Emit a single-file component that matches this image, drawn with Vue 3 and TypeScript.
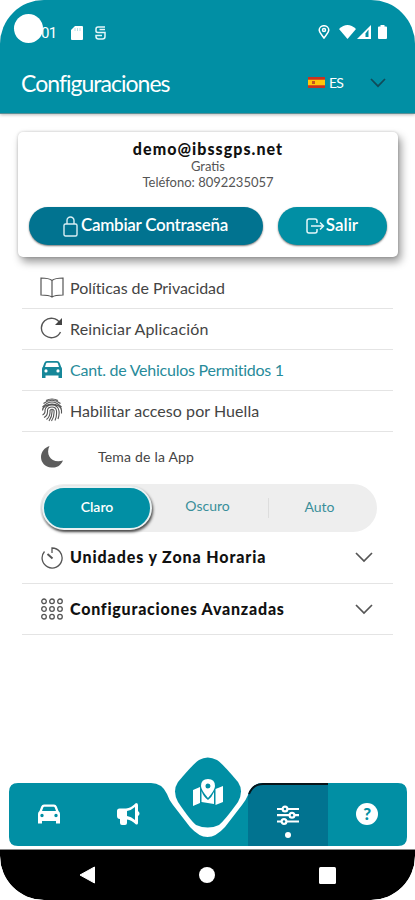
<script setup lang="ts">
import { ref } from 'vue'

const themes = ['Claro', 'Oscuro', 'Auto']
const activeTheme = ref('Claro')
const dots = [4, 11, 18]
</script>

<template>
  <div class="screen">
    <header class="header">
      <div class="status">
        <div class="status-left">
          <i class="camera"></i>
          <span class="time">01</span>
          <svg class="sd" width="12" height="14" viewBox="0 0 12 14"><path d="M4 0h7q1 0 1 1v12q0 1-1 1H1q-1 0-1-1V4z" fill="#fff" /><path d="M4 2v3M6.500 2v3M9 2v3" stroke="#a5d7df" stroke-width=".8" /></svg>
          <svg class="five" width="11" height="14" viewBox="0 0 11 14" fill="none" stroke="#e4f6f9" stroke-width="1.500"><path d="M10 1H3Q1 1 1 3v2q0 1.500 2 1.500h7v4q0 2.500-2.500 2.500h-4Q1 13 1 10.500V9.500h6M4.500 3.500H10" /></svg>
        </div>
        <div class="status-right">
          <svg width="12" height="14" viewBox="0 0 12 14" fill="none" stroke="#fff" stroke-width="1.500"><path d="M6 13C4 10 1.200 7.500 1.200 5a4.800 4.300 0 0 1 9.600 0C10.800 7.500 8 10 6 13z" /><circle cx="6" cy="5" r="1.500" /></svg>
          <svg class="wifi" width="17" height="14" viewBox="0 0 17 14"><path d="M0 4Q8.500-4 17 4L8.500 14z" fill="#fff" /></svg>
          <svg class="cell" width="14" height="14" viewBox="0 0 14 14"><path d="M14 0v14H0z" fill="#fff" /><path d="M8.500 8.500 11.500 4.500v7.500h-3z" fill="#018fa4" /></svg>
          <svg class="battery" width="9" height="14" viewBox="0 0 9 14"><path d="M2.500 0h4v1.500H8q1 0 1 1V13q0 1-1 1H1q-1 0-1-1V2.500q0-1 1-1h1.500z" fill="#fff" /></svg>
        </div>
      </div>
      <div class="title-bar">
        <h1>Configuraciones</h1>
        <div class="lang">
          <svg width="17" height="11" viewBox="0 0 17 11"><path fill="#c8321f" d="M0 0h17v11H0z" /><path fill="#ffc50b" d="M0 2.700h17v5.600H0z" /><path fill="#c4551c" d="M4 4h3v3H4z" /></svg>
          <span>ES</span>
          <svg class="lang-chevron" width="16" height="10" viewBox="0 0 16 10" fill="none" stroke="#114b59" stroke-width="1.700"><path d="m1 1 7 7.200L15 1" /></svg>
        </div>
      </div>
    </header>

    <main>
      <section class="account">
        <strong class="email">demo@ibssgps.net</strong>
        <span class="plan">Gratis</span>
        <span class="phone">Teléfono: 8092235057</span>
        <div class="actions">
          <button class="btn password">
            <svg width="15" height="21" viewBox="0 0 15 21" fill="none" stroke="#d8eef4" stroke-width="1.400"><rect x="1" y="8" width="13" height="12" rx="1.500" /><path d="M4 8V4.500a3.500 3.500 0 0 1 7 0V8" /></svg>
            <span>Cambiar Contraseña</span>
          </button>
          <button class="btn exit">
            <svg width="19" height="16" viewBox="0 0 19 16" fill="none" stroke="#e4f7fa" stroke-width="1.500"><path d="M11 5V3q0-2-2-2H3Q1 1 1 3v10q0 2 2 2h6q2 0 2-2v-2M5 8h12M14 4.500 17.500 8 14 11.500" /></svg>
            <span>Salir</span>
          </button>
        </div>
      </section>

      <ul class="options">
        <li>
          <svg width="24" height="21" viewBox="0 0 24 21" fill="none" stroke="#555" stroke-width="1.200"><path d="M12 3.500Q9 1 1 1v17q8 0 11 2 3-2 11-2V1q-8 0-11 2.500zM12 3.500V20" /></svg>
          <span class="t-policy">Políticas de Privacidad</span>
        </li>
        <li>
          <svg width="24" height="22" viewBox="0 0 24 22" fill="none" stroke="#555" stroke-width="1.400"><path d="M20.500 15A10 9.700 0 1 1 20 6" /><path d="M22 1v7h-7z" fill="#444" stroke="none" /></svg>
          <span class="t-restart">Reiniciar Aplicación</span>
        </li>
        <li class="highlight">
          <svg width="24" height="20" viewBox="0 0 24 20"><path fill="#168799" fill-rule="evenodd" d="M7 2h10q2 0 2.700 2l1.500 4q.8.600.8 2v9h-3.500v-2.500h-13V19H2v-9q0-1.400.8-2l1.500-4Q5 2 7 2zm0 1.800q-.6 0-.9.800L5 8h14l-1.100-3.400q-.3-.8-.9-.8zM6 10.300a1.600 1.600 0 1 0 0 3.200 1.600 1.600 0 0 0 0-3.200m12 0a1.600 1.600 0 1 0 0 3.200 1.600 1.600 0 0 0 0-3.200" /></svg>
          <span class="t-vehicles">Cant. de Vehiculos Permitidos 1</span>
        </li>
        <li>
          <svg width="24" height="24" viewBox="0 0 24 24" fill="none" stroke="#555" stroke-width="1.100"><path d="M6 2.500q6-3 12 0M3.500 5.500Q12-1 20.500 5.500M2.500 9Q12-1 21.500 9M2.500 12.500C3 4 21 4 21.500 12.500v3M2.500 17q3-1 2.500-5 1-5 7-5t7 6q.5 4-1 8M4 19.500q4-2 3.500-7.500.5-3 4.500-3t4.500 4q.5 5-1.500 9.500M6.500 21.500q4-3 3.500-9 2-2.500 4 0 .5 6-2.500 10.500M12 12q.5 6-3 11" /></svg>
          <span class="t-finger">Habilitar acceso por Huella</span>
        </li>
      </ul>

      <div class="theme-label">
        <svg width="24" height="24" viewBox="0 0 24 24"><path fill="#5d5d5d" d="M9.500 1C5 10 12 19 23 15.500 20 22 15 23 11.500 22.500 5 22 1 17.500 1 12 1 7 4.500 2.500 9.500 1z" /></svg>
        <span>Tema de la App</span>
      </div>
      <div class="segment">
        <button v-for="t in themes" :key="t" :class="{ active: t === activeTheme }" @click="activeTheme = t"><span>{{ t }}</span></button>
      </div>

      <div class="group first">
        <svg width="24" height="22" viewBox="0 0 24 22" fill="none" stroke="#555" stroke-width="1.300"><path d="M12 6V1a10 10 0 1 1-7.500 3.500" /><path d="m7.500 7 5 4.500" stroke-width="1.900" /></svg>
        <span class="t-units">Unidades y Zona Horaria</span>
        <svg class="chev" width="18" height="11" viewBox="0 0 18 11" fill="none" stroke="#555" stroke-width="1.700"><path d="m1 1 8 8 8-8" /></svg>
      </div>
      <div class="group second">
        <svg width="24" height="22" viewBox="0 0 24 22" fill="none" stroke="#555" stroke-width="1.300"><template v-for="y in dots" :key="y"><circle v-for="x in dots" :key="x" :cx="(x - 11) * 1.14 + 12" :cy="(y - 11) * 1.1 + 11" r="2.300" /></template></svg>
        <span class="t-advanced">Configuraciones Avanzadas</span>
        <svg class="chev" width="18" height="11" viewBox="0 0 18 11" fill="none" stroke="#555" stroke-width="1.700"><path d="m1 1 8 8 8-8" /></svg>
      </div>
    </main>

    <nav class="tabs">
      <svg class="tabs-shape" width="415" height="100" viewBox="0 0 415 100">
        <path fill="#018fa4" d="M18 33H151Q162 33 167 44 169 50 173 55L190 77Q199 87 207.500 87T225 77L242 55Q246 50 248 45 252 33 263 33H398q9 0 9 9v45q0 9-9 9H18q-9 0-9-9V42q0-9 9-9z" />
        <path fill="#017390" d="M248 96V45Q252 33 263 33h65v63z" />
        <path fill="none" stroke="#071419" stroke-width="2" d="M249 44Q253 34 263 34h65" />
        <path fill="#018fa4" d="M199 10Q207.500 5 217 10 222 13 238 32q6 9 0 20Q225 70 219 75q-11 5-23 0Q190 70 178 52q-6-11 0-20Q194 13 199 10z" />
      </svg>
      <div class="tab-icons">
        <svg width="24" height="20" viewBox="0 0 24 20"><path fill="#fff" fill-rule="evenodd" d="M7 .5h10q2 0 2.800 2L21.500 7q1.500.8 1.500 3v9.500h-4V17H5v2.500H1V10q0-2.200 1.500-3l1.700-4.500Q5 .5 7 .5zm.2 2.200q-.6 0-.9.800L5 7h14l-1.300-3.500q-.3-.8-.9-.8zM5 9.800a1.700 1.700 0 1 0 0 3.400 1.700 1.700 0 0 0 0-3.400m14 0a1.700 1.700 0 1 0 0 3.400 1.700 1.700 0 0 0 0-3.400" /></svg>
        <svg width="24" height="22" viewBox="0 0 24 22"><path fill="#fff" fill-rule="evenodd" d="M20 0q2 0 2 2v6q1.500 1 1.500 2.500T22 13v7q0 2-2 1.500-4.500-4.500-9-5V20q0 2-2 2H6q-2 0-2-2v-4q-3 0-3-3V8q0-2.500 2.500-2.500H10Q15 5 20 0zm-1 4q-4 3.500-8 4v5q4 .5 8 4z" /></svg>
        <svg class="map-icon" width="32" height="28" viewBox="0 0 32 28"><path fill="#fff" d="m1 11 7-3v16l-7 3zM9.500 12q2 6 6.500 9 4-3 6-8v12l-12.500-2zM23.500 10 31 7v16l-7.500 3z" /><path fill="#fff" fill-rule="evenodd" d="M16 0q7 0 7 7 0 4-7 12-7-8-7-12 0-7 7-7m0 4.500a2.500 2.500 0 1 0 0 5 2.500 2.500 0 0 0 0-5" /></svg>
        <div class="current">
          <svg width="22" height="20" viewBox="0 0 22 20" fill="#017390" stroke="#fff" stroke-width="2.200"><path d="M0 4h22M0 10.200h22M0 16.500h22" /><circle cx="8" cy="4" r="2.400" /><circle cx="15" cy="10.200" r="2.400" /><circle cx="7" cy="16.500" r="2.400" /></svg>
          <i></i>
        </div>
        <span class="help">?</span>
      </div>
    </nav>
    <footer class="system">
      <svg width="16" height="18" viewBox="0 0 16 18"><path d="M15.500 1v16L1 9z" fill="#fff" stroke="#fff" stroke-linejoin="round" /></svg>
      <svg width="16" height="16" viewBox="0 0 16 16"><circle cx="8" cy="8" r="8" fill="#fff" /></svg>
      <svg width="17" height="17" viewBox="0 0 17 17"><rect width="17" height="17" rx="1.500" fill="#fff" /></svg>
    </footer>
  </div>
</template>

<style>
html, body { margin: 0; background: #fff; }
</style>
<style scoped>
* { box-sizing: border-box; }
.screen { width: 415px; height: 900px; display: flex; flex-direction: column; overflow: hidden; background: #fff; font-family: Lato, "Liberation Sans", sans-serif; color: #444; border-radius: 44px; }
svg { display: block; flex: none; }
span, strong, h1 { white-space: nowrap; }
button { font: inherit; border: 0; padding: 0; margin: 0; }
.header { height: 114px; flex: none; background: #018fa4; color: #fff; border-bottom: 1px solid #5b8f96; box-shadow: 0 1px 3px #0004; }
.status { height: 56px; padding: 14px 28px 0 14px; display: flex; justify-content: space-between; }
.status-left, .status-right { display: flex; }
.camera { width: 29px; height: 29px; border-radius: 50%; background: #fff; }
.time { width: 16px; margin: 9px 0 0 -2px; font: 15px/20px Roboto, sans-serif; letter-spacing: -.8px; }
.sd { margin: 12px 0 0 14px; }
.five { margin: 12px 0 0 12px; }
.status-right { padding-top: 11px; }
.wifi { margin-left: 9px; }
.cell { margin-left: 1px; }
.battery { margin-left: 7px; }
.title-bar { height: 54px; display: flex; align-items: center; justify-content: space-between; padding: 0 29px 0 21px; }
h1 { margin: 0; font-size: 23px; font-weight: 400; letter-spacing: -.98px; line-height: 30px; font-variant-ligatures: none; }
.lang { display: flex; align-items: center; margin-top: -2px; }
.lang span { width: 18px; margin-left: 4px; font-size: 14px; letter-spacing: -.8px; }
.lang-chevron { margin-left: 23px; margin-top: 2px; }
main { flex: none; height: 636px; }
.account { width: 380px; height: 125px; margin: 18px 0 0 18px; padding-top: 7px; display: flex; flex-direction: column; align-items: center; border-radius: 5px; background: #fff; box-shadow: 3px 5px 9px #0006, 0 0 3px #0003; }
.email { font-size: 16px; line-height: 19px; font-weight: 900; color: #111; letter-spacing: 1.05px; }
.plan { font-size: 13px; line-height: 17px; }
.phone { font-size: 13px; line-height: 15px; }
.plan, .phone { color: #555; }
.actions { display: flex; gap: 15px; margin-top: 17px; padding-right: 1px; }
.btn { height: 38px; display: flex; align-items: center; justify-content: center; color: #fff; border-radius: 19px; font-size: 17px; font-weight: 600; box-shadow: 0 1px 2px #0008; }
.btn span { padding-bottom: 3px; }
.password { width: 234px; gap: 3px; background: #017390; }
.password span { letter-spacing: -.28px; }
.exit { width: 109px; gap: 1px; background: #018fa4; }
.options { list-style: none; margin: 11px 22px 0; padding: 0; }
.options li { height: 41px; display: flex; align-items: center; gap: 6px; padding: 0 0 2px 18px; border-bottom: 1px solid #e4e4e4; font-size: 16px; }
.options .highlight { color: #278b9a; }
.t-policy { letter-spacing: -.05px; }
.t-restart { letter-spacing: .15px; }
.t-vehicles { letter-spacing: -.25px; }
.t-finger { letter-spacing: .06px; }
.theme-label { height: 50px; display: flex; align-items: center; padding-left: 40px; gap: 34px; font-size: 14px; letter-spacing: .2px; }
.theme-label span { padding-bottom: 2px; }
.segment { width: 337px; height: 48px; margin: 2px 0 0 40px; padding: 2px 0; display: grid; grid-template-columns: 112px 117px 1fr; background: #eee; border-radius: 24px; }
.segment button { height: 44px; background: transparent; color: #398e9a; font-size: 14px; padding-bottom: 4px; }
.segment button:nth-child(2) { border-right: 1px solid #ddd; height: 20px; align-self: center; padding: 0 5px 4px 0; line-height: 16px; }
.segment button:nth-child(3) { padding-right: 7px; }
.segment .active { margin-left: 2px; background: #018fa4; color: #fff; border: 2px solid #e9f1f2; border-radius: 22px; box-shadow: 1px 2px 3px #000b; font-weight: 600; }
.group { margin: 0 22px; padding: 0 20px 0 18px; display: flex; align-items: center; gap: 6px; border-bottom: 1px solid #e4e4e4; color: #111; font-size: 16px; font-weight: 900; }
.group span { padding-bottom: 2px; }
.t-units { letter-spacing: .89px; }
.t-advanced { letter-spacing: .77px; }
.first { height: 52px; }
.second { height: 51px; }
.chev { margin-left: auto; }
.tabs { flex: none; height: 100px; display: grid; position: relative; z-index: 1; }
.tabs-shape, .tab-icons { grid-area: 1 / 1; }
.tab-icons { height: 63px; margin-top: 29px; padding: 0 8px 0 9px; display: grid; grid-template-columns: repeat(5, 1fr); justify-items: center; align-items: center; }
.map-icon { margin-bottom: 42px; }
.current { display: flex; flex-direction: column; align-items: center; gap: 7px; padding-top: 15px; }
.current i { width: 6px; height: 6px; border-radius: 50%; background: #fff; }
.help { width: 22px; height: 22px; border-radius: 50%; background: #fff; color: #018fa4; text-align: center; font-size: 17px; line-height: 22px; font-weight: 900; }
.system { flex: none; height: 51px; margin-top: -1px; background: #000; border-top: 1px solid #888; border-radius: 0 0 44px 44px; padding: 0 79px; display: flex; align-items: center; justify-content: space-between; }
</style>
